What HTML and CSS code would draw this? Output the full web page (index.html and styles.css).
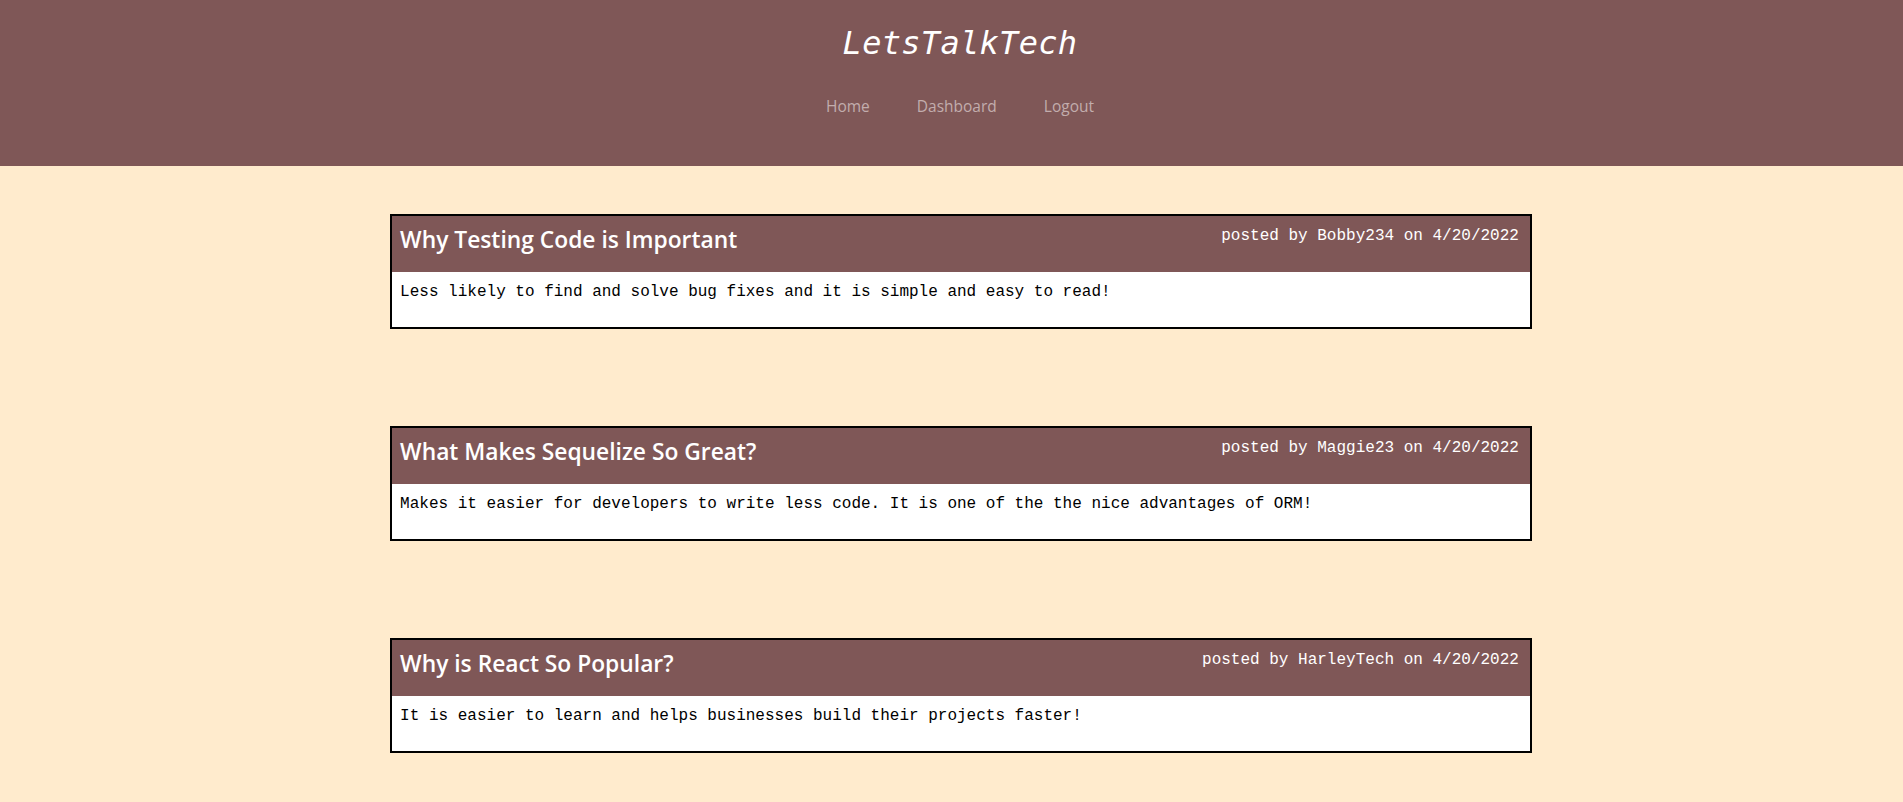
FILE: index.html
```html
<!DOCTYPE html>
<html lang="en">
<head>
<meta charset="utf-8">
<title>LetsTalkTech</title>
<link rel="stylesheet" href="styles.css">
</head>
<body>
<header class="site-header">
  <h1 class="site-title">LetsTalkTech</h1>
  <nav class="site-nav">
    <a href="#" class="nav-link">Home</a>
    <a href="#" class="nav-link">Dashboard</a>
    <a href="#" class="nav-link">Logout</a>
  </nav>
</header>
<main class="posts">
  <article class="post">
    <div class="post-head">
      <h2 class="post-title">Why Testing Code is Important</h2>
      <p class="post-meta">posted by Bobby234 on 4/20/2022</p>
    </div>
    <div class="post-body">
      <p class="post-text">Less likely to find and solve bug fixes and it is simple and easy to read!</p>
    </div>
  </article>
  <article class="post">
    <div class="post-head">
      <h2 class="post-title">What Makes Sequelize So Great?</h2>
      <p class="post-meta">posted by Maggie23 on 4/20/2022</p>
    </div>
    <div class="post-body">
      <p class="post-text">Makes it easier for developers to write less code. It is one of the the nice advantages of ORM!</p>
    </div>
  </article>
  <article class="post">
    <div class="post-head">
      <h2 class="post-title">Why is React So Popular?</h2>
      <p class="post-meta">posted by HarleyTech on 4/20/2022</p>
    </div>
    <div class="post-body">
      <p class="post-text">It is easier to learn and helps businesses build their projects faster!</p>
    </div>
  </article>
</main>
</body>
</html>
```

FILE: styles.css
```css
html, body {
  margin: 0;
  padding: 0;
}
body {
  background: #ffebcd;
  font-family: "Open Sans", "Noto Sans", sans-serif;
  min-height: 802px;
}
.site-header {
  background: #7f5757;
  height: 166px;
  box-sizing: border-box;
  padding-top: 23px;
  padding-left: 17px;
  display: flex;
  flex-direction: column;
  align-items: center;
}
.site-title {
  margin: 0;
  font-family: "DejaVu Sans Mono", monospace;
  font-style: italic;
  font-weight: normal;
  font-size: 32px;
  letter-spacing: 0.3px;
  line-height: 40px;
  color: #ffffff;
}
.site-nav {
  margin-top: 31px;
  display: flex;
  gap: 47px;
  line-height: 24px;
}
.nav-link {
  color: #c2adad;
  text-decoration: none;
  font-size: 15.5px;
}
.posts {
  width: 60%;
  margin-left: 20.5%;
  padding-top: 48px;
  display: flex;
  flex-direction: column;
  gap: 97px;
}
.post {
  border: 2px solid #000;
  background: #fff;
  box-sizing: border-box;
}
.post-head {
  background: #7f5757;
  display: flex;
  justify-content: space-between;
  align-items: flex-start;
  padding: 8px 11px 18px 8px;
  height: 56px;
  box-sizing: border-box;
}
.post-title {
  margin: 0;
  font-family: "Open Sans", sans-serif;
  font-weight: 600;
  font-size: 22.8px;
  line-height: 31px;
  color: #fff;
}
.post-meta {
  margin: 3px 0 0 0;
  font-family: "Liberation Mono", monospace;
  font-size: 16px;
  line-height: 18px;
  color: #fff;
}
.post-body {
  height: 55px;
  box-sizing: border-box;
  padding: 11px 8px 0 8px;
}
.post-text {
  margin: 0;
  font-family: "Liberation Mono", monospace;
  font-size: 16px;
  line-height: 18px;
  color: #000;
}
```
